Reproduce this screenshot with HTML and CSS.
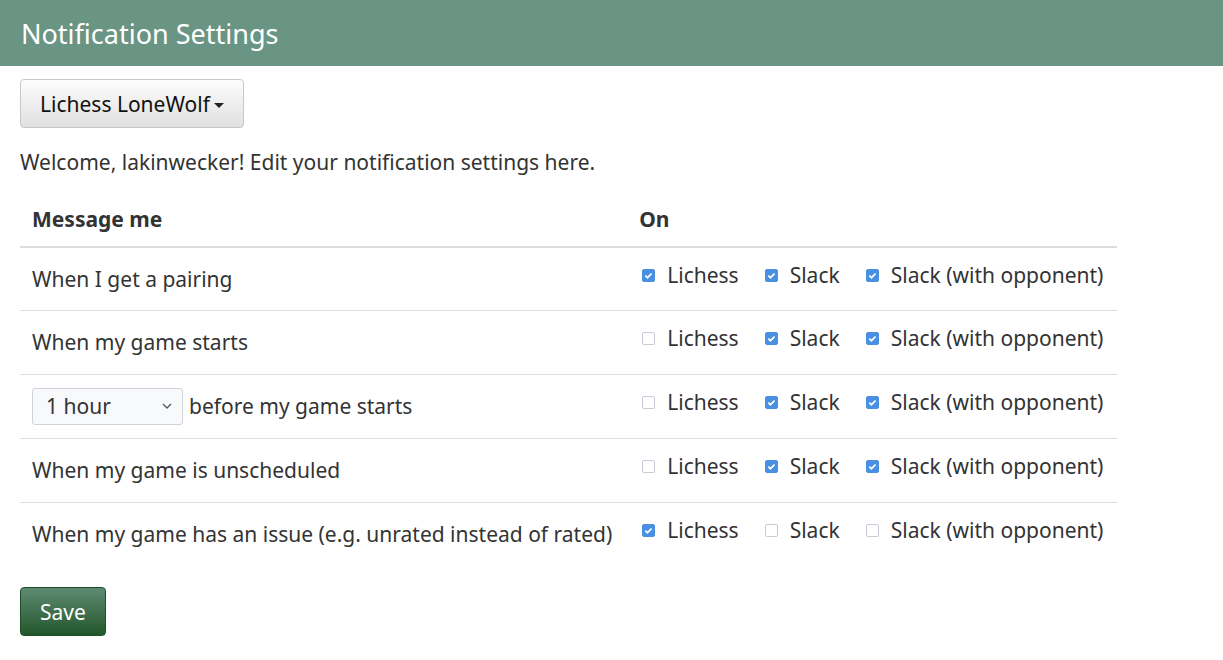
FILE: index.html
```html
<!DOCTYPE html>
<html>
<head>
<meta charset="utf-8">
<link rel="stylesheet" href="styles.css">
</head>
<body>
<header class="topbar"><h1 class="title">Notification Settings</h1></header>
<main class="content">
  <button class="dropdown-btn">Lichess LoneWolf <span class="caret"></span></button>
  <p class="welcome">Welcome, lakinwecker! Edit your notification settings here.</p>
  <table class="settings">
    <thead>
      <tr><th>Message me</th><th>On</th></tr>
    </thead>
    <tbody>
      <tr>
        <td>When I get a pairing</td>
        <td><div class="opts">
          <label class="opt"><span class="cb on"></span>Lichess</label>
          <label class="opt"><span class="cb on"></span>Slack</label>
          <label class="opt"><span class="cb on"></span>Slack (with opponent)</label>
        </div></td>
      </tr>
      <tr>
        <td>When my game starts</td>
        <td><div class="opts">
          <label class="opt"><span class="cb"></span>Lichess</label>
          <label class="opt"><span class="cb on"></span>Slack</label>
          <label class="opt"><span class="cb on"></span>Slack (with opponent)</label>
        </div></td>
      </tr>
      <tr>
        <td><div class="rowlabel"><span class="select">1 hour<svg class="chev" viewBox="0 0 10 6" width="10" height="6"><path d="M1 1 L5 5 L9 1" fill="none" stroke="#555" stroke-width="1.3"/></svg></span>before my game starts</div></td>
        <td><div class="opts">
          <label class="opt"><span class="cb"></span>Lichess</label>
          <label class="opt"><span class="cb on"></span>Slack</label>
          <label class="opt"><span class="cb on"></span>Slack (with opponent)</label>
        </div></td>
      </tr>
      <tr>
        <td>When my game is unscheduled</td>
        <td><div class="opts">
          <label class="opt"><span class="cb"></span>Lichess</label>
          <label class="opt"><span class="cb on"></span>Slack</label>
          <label class="opt"><span class="cb on"></span>Slack (with opponent)</label>
        </div></td>
      </tr>
      <tr>
        <td>When my game has an issue (e.g. unrated instead of rated)</td>
        <td><div class="opts">
          <label class="opt"><span class="cb on"></span>Lichess</label>
          <label class="opt"><span class="cb"></span>Slack</label>
          <label class="opt"><span class="cb"></span>Slack (with opponent)</label>
        </div></td>
      </tr>
    </tbody>
  </table>
  <button class="save-btn">Save</button>
</main>
</body>
</html>
```
FILE: styles.css
```css
html, body {
  margin: 0;
  padding: 0;
  background: #fff;
  font-family: "Noto Sans", "Open Sans", sans-serif;
  color: #333;
  font-size: 21px;
}
.topbar {
  background: #6a9585;
  height: 66px;
  display: flex;
  align-items: center;
  padding: 0 21px;
}
.title {
  margin: 0;
  font-weight: 400;
  font-size: 27px;
  color: #fff;
}
.content {
  padding: 13px 20px 20px;
}
.dropdown-btn {
  font-family: inherit;
  font-size: 21px;
  color: #111;
  line-height: 28px;
  padding: 10px 19px 9px;
  border: 1px solid #c8c8c8;
  border-radius: 4px;
  background: linear-gradient(#fdfdfd, #e0e0e0);
  display: inline-flex;
  align-items: center;
  gap: 4px;
}
.caret {
  display: inline-block;
  width: 0;
  height: 0;
  border-left: 5px solid transparent;
  border-right: 5px solid transparent;
  border-top: 5px solid #222;
  margin-top: 2px;
}
.welcome {
  margin: 20px 0 15px;
  line-height: 28px;
}
.settings {
  border-collapse: collapse;
  margin-bottom: 21px;
}
.settings th {
  text-align: left;
  font-weight: 700;
  line-height: 28px;
  padding: 14px 12px 13px;
  border-bottom: 2px solid #ddd;
}
.settings td {
  line-height: 28px;
  padding: 17px 12px 18px;
  border-top: 1px solid #ddd;
  vertical-align: middle;
}
.settings th:first-child,
.settings td:first-child {
  padding-right: 15px;
}
.settings th:last-child,
.settings td:last-child {
  padding-right: 14px;
}
.settings tbody tr:first-child td {
  border-top: none;
  padding-bottom: 17px;
}
.rowlabel {
  display: flex;
  align-items: center;
  height: 28px;
  gap: 6px;
}
.opts {
  display: flex;
  gap: 23px;
  padding-bottom: 8px;
  margin-top: -4px;
  margin-bottom: -4px;
}
.opt {
  display: flex;
  align-items: center;
  gap: 12px;
}
.cb {
  display: inline-block;
  width: 13px;
  height: 13px;
  box-sizing: border-box;
  border: 1px solid #c9ccd6;
  border-radius: 2px;
  background: #fff;
  margin-left: 3px;
}
.cb.on {
  background: #4a90e2 url("data:image/svg+xml;utf8,<svg xmlns='http://www.w3.org/2000/svg' viewBox='0 0 13 13'><path d='M3.3 6.6 L5.5 8.7 L9.6 4.5' fill='none' stroke='white' stroke-width='1.7'/></svg>") center/13px 13px no-repeat;
  border-color: #4a90e2;
}
.select {
  flex: none;
  display: inline-flex;
  align-items: center;
  justify-content: space-between;
  box-sizing: border-box;
  width: 151px;
  height: 37px;
  padding: 0 10px 0 13px;
  border: 1px solid #ced4da;
  border-radius: 3px;
  background: #f8f9fb;
}
.save-btn {
  font-family: inherit;
  font-size: 21px;
  color: #fff;
  line-height: 28px;
  padding: 10px 19px 9px;
  border: 1px solid #1f4d26;
  border-radius: 4px;
  background: linear-gradient(#5e8a73, #22572a);
}
```
